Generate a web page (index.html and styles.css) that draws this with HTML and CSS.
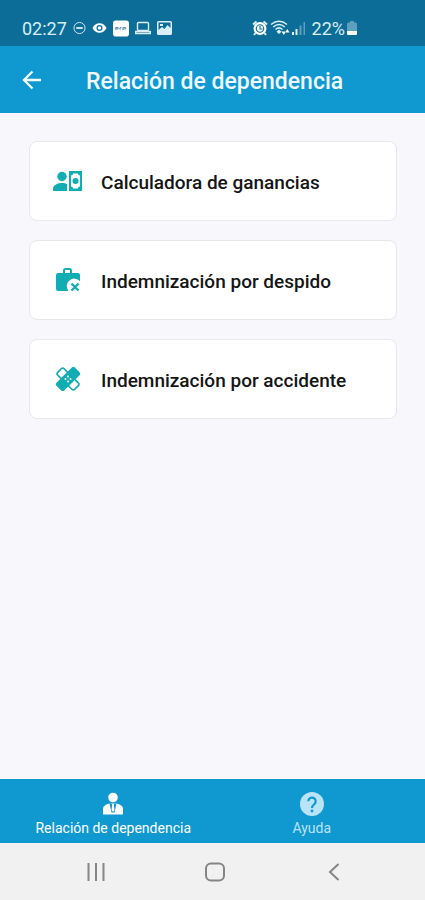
FILE: index.html
```
<!DOCTYPE html>
<html lang="es">
    <head>
        <meta charset="utf-8">
        <meta name="viewport" content="width=device-width, initial-scale=1">
        <title>Relación de dependencia</title>
        <link rel="stylesheet" href="styles.css">
    </head>
    <body>
        <div class="status">
            <div class="status-left">
                <span>02:27</span>
                <svg width="13" height="14" viewBox="0 0 14 14" fill="none" stroke="currentColor">
                    <circle cx="7" cy="7" r="6"/>
                    <path d="M3.5 7h7" stroke-width="2"/>
                </svg>
                <svg width="15" height="14" viewBox="0 0 16 14">
                    <path fill="#fff" fill-rule="evenodd" d="M0.500 7C2 3.700 4.800 2 8 2s6 1.700 7.500 5C14 10.300 11.200 12 8 12S2 10.300 0.500 7zM8 3.800a3.200 3.200 0 1 0 0 6.400 3.200 3.200 0 0 0 0-6.400z"/>
                    <circle cx="8" cy="7" r="1.800" fill="#fff"/>
                </svg>
                <svg width="16" height="18" viewBox="0 0 17 18">
                    <rect width="17" height="17" y="1" rx="3" fill="#fff"/>
                    <path d="M3 8v3M3 8.500h2.500v1.500H3M7.500 11V8.500H9M10.500 11V8.500h3V10h-3" fill="none" stroke="#4d8aa5"/>
                </svg>
                <svg width="16" height="14" viewBox="0 0 16 14" fill="none" stroke="currentColor" stroke-width="1.400">
                    <rect x="2.500" y="1.500" width="11" height="8" rx="1"/>
                    <path d="M0.700 10.500v2h14.600v-2z"/>
                </svg>
                <svg width="15" height="14" viewBox="0 0 15 14">
                    <path fill="currentColor" fill-rule="evenodd" d="M1.500 0h12A1.500 1.500 0 0 1 15 1.500v11a1.500 1.500 0 0 1-1.500 1.500h-12A1.500 1.500 0 0 1 0 12.500v-11A1.500 1.500 0 0 1 1.500 0zM1.500 9l3.500-3 2.500 2 3-4 3 3V1.500h-12zM3 3h3v2H3z"/>
                </svg>
            </div>
            <div class="status-right">
                <svg width="16" height="16" viewBox="0 0 16 16">
                    <path d="M1 4.500L4.500 1.500M15 4.500L11.500 1.500M3.500 13L2 15M12.500 13l1.500 2" stroke="currentColor" stroke-width="2"/>
                    <circle cx="8" cy="8.500" r="6.500" fill="#fff"/>
                    <circle cx="8" cy="8.500" r="3.700" fill="none" stroke="#0c6d98" stroke-width="1.100"/>
                    <path d="M8 6v3h2.500" fill="none" stroke="#0c6d98" stroke-width="1.200"/>
                </svg>
                <svg width="20" height="16" viewBox="0 0 20 16">
                    <path d="M1 4.500Q9 -2 17 4.500M3.200 7Q9 2 14.800 7M5.500 9.500Q9 6.200 12.500 9.500" fill="none" stroke="currentColor" stroke-width="1.500"/>
                    <path d="M9 9.500l2.500 2.200L9 14 6.500 11.700z" fill="currentColor"/>
                    <path d="M11.500 11.500h4.500l-2.200 3.500zM15 12.500h4.500L17.300 9z" fill="#fff"/>
                </svg>
                <svg width="14" height="16" viewBox="0 0 14 16" fill="currentColor">
                    <path d="M0 12h2v3H0zM3.500 9h2v6h-2z"/>
                    <path d="M7.500 5.500h2V15h-2zM11.500 2h1.500v13h-1.500z" opacity=".4"/>
                </svg>
                <span class="percent">22%</span>
                <svg width="10" height="16" viewBox="0 0 10 16" fill="currentColor">
                    <path d="M3 1h4v1.500h1.500a1.500 1.500 0 0 1 1.500 1.500V11H0V4a1.500 1.500 0 0 1 1.500-1.500H3z" opacity=".4"/>
                    <path d="M0 11h10v3a1 1 0 0 1-1 1H1a1 1 0 0 1-1-1z" fill="#fff"/>
                </svg>
            </div>
        </div>

        <header class="bar">
            <button type="button" class="back" aria-label="Volver">
                <svg width="20" height="20" viewBox="0 0 20 20" fill="none" stroke="currentColor" stroke-width="2.300">
                    <path d="M19 10H2M10.500 1.500L2 10l8.500 8.500"/>
                </svg>
            </button>
            <h1 class="title">Relación de dependencia</h1>
        </header>

        <main class="list">
            <a href="#ganancias" class="card">
                <svg class="card-icon" width="30" height="24" viewBox="0 0 30 24" fill="currentColor">
                    <circle cx="9" cy="7.500" r="4.700"/>
                    <path d="M0 22v-2.500C0 16 5 14 9 14c2 0 3.500.400 5 1v7z"/>
                    <path fill-rule="evenodd" d="M16 2h13v20H16zM20 4.500c0 1.200-.700 2-2 2v11c1.300 0 2 .800 2 2h5c0-1.200.700-2 2-2v-11c-1.300 0-2-.800-2-2z"/>
                    <circle cx="22.500" cy="12" r="3"/>
                </svg>
                <span>Calculadora de ganancias</span>
            </a>
            <a href="#despido" class="card">
                <svg class="card-icon" width="30" height="24" viewBox="0 0 30 24">
                    <path fill="currentColor" fill-rule="evenodd" d="M5 5h5V2.500A2.500 2.500 0 0 1 12.500 0h4A2.500 2.500 0 0 1 19 2.500V5h6a2 2 0 0 1 2 2v6.300A7.500 7.500 0 0 0 15.500 23H5a2 2 0 0 1-2-2V7a2 2 0 0 1 2-2zM12 5h5V2h-5z"/>
                    <path d="M18.500 15.500l7 7M25.500 15.500l-7 7" stroke="currentColor" stroke-width="2.400"/>
                </svg>
                <span>Indemnización por despido</span>
            </a>
            <a href="#accidente" class="card">
                <svg class="card-icon" width="30" height="24" viewBox="0 0 30 24">
                    <g transform="rotate(45 15 12)">
                        <rect x="3" y="7.500" width="24" height="9" rx="2" fill="#fff" stroke="currentColor" stroke-width="1.700"/>
                    </g>
                    <g transform="rotate(-45 15 12)">
                        <rect x="2" y="6.500" width="26" height="11" rx="2.500" fill="currentColor"/>
                    </g>
                    <g fill="#fff">
                        <circle cx="15" cy="9.500" r="1"/>
                        <circle cx="12.500" cy="12" r="1"/>
                        <circle cx="17.500" cy="12" r="1"/>
                        <circle cx="15" cy="14.500" r="1"/>
                    </g>
                </svg>
                <span>Indemnización por accidente</span>
            </a>
        </main>

        <nav class="tabs">
            <a href="#relacion" class="tab active">
                <svg width="24" height="24" viewBox="0 0 24 24" fill="currentColor">
                    <circle cx="12" cy="5.500" r="4.800"/>
                    <path d="M2 22.500v-5.500c0-3 2.500-4.500 6.500-5.500h7c4 1 6.500 2.500 6.500 5.500v5.500z"/>
                    <path d="M8.500 11.500l2 9h3l2-9h-2l-.700 1.500.700 5-1.500 2-1.500-2 .700-5-.700-1.500z" fill="#1098d1"/>
                </svg>
                <span>Relación de dependencia</span>
            </a>
            <a href="#ayuda" class="tab">
                <svg width="24" height="24" viewBox="0 0 24 24">
                    <circle cx="12" cy="12" r="12" fill="currentColor"/>
                    <path d="M8.300 9.300a3.700 3.700 0 1 1 6.200 2.700c-1.500 1.300-2.500 1.800-2.500 4" fill="none" stroke="#1098d1" stroke-width="2.200"/>
                    <circle cx="12" cy="19" r="1.400" fill="#1098d1"/>
                </svg>
                <span>Ayuda</span>
            </a>
        </nav>

        <div class="sysnav">
            <button type="button" class="sys" aria-label="Recientes">
                <svg width="20" height="20" viewBox="0 0 20 20" stroke="currentColor" stroke-width="2">
                    <path d="M2.500 1v18M10 1v18M17.500 1v18"/>
                </svg>
            </button>
            <button type="button" class="sys" aria-label="Inicio">
                <svg width="20" height="20" viewBox="0 0 20 20" fill="none" stroke="currentColor" stroke-width="2">
                    <rect x="1" y="1.500" width="18" height="17" rx="5"/>
                </svg>
            </button>
            <button type="button" class="sys" aria-label="Atrás">
                <svg width="20" height="20" viewBox="0 0 20 20" fill="none" stroke="currentColor" stroke-width="2">
                    <path d="M14.500 2L6 10l8.500 8"/>
                </svg>
            </button>
        </div>
    </body>
</html>
```
FILE: styles.css
```
*{
    box-sizing: border-box;
}
body{
    margin: 0;
    min-height: 100vh;
    display: flex;
    flex-direction: column;
    background-color: #f7f7fc;
    font-family: Roboto, "Liberation Sans", sans-serif;
}
svg{
    display: block;
    flex-shrink: 0;
}
button{
    border: none;
    padding: 0;
    background: none;
    color: inherit;
}
a{
    text-decoration: none;
}
.status{
    display: flex;
    justify-content: space-between;
    height: 46px;
    padding: 11px 68px 0 22px;
    background-color: #0c6d98;
    color: #d9eef6;
    font-size: 18px;
}
.status-left, .status-right{
    display: flex;
    align-items: center;
    height: 34px;
}
.status-left{
    gap: 6px;
}
.status-right{
    gap: 2px;
}
.percent{
    padding-left: 4px;
}
.bar{
    display: flex;
    align-items: center;
    gap: 44px;
    height: 67px;
    background-color: #1098d1;
    padding: 0 22px;
    color: #f0fafe;
}
.title{
    margin: 0;
    padding-top: 4px;
    font-size: 23px;
    font-weight: 500;
}
.list{
    flex: 1;
    display: flex;
    flex-direction: column;
    gap: 19px;
    padding: 28px 28px 28px 29px;
}
.card{
    display: flex;
    align-items: center;
    gap: 18px;
    height: 80px;
    padding: 0 23px;
    background-color: #fff;
    border: 1px solid #e8e8ec;
    border-radius: 8px;
    color: #151515;
    font-size: 19px;
    font-weight: 500;
}
.card span{
    padding-top: 2px;
}
.card-icon{
    color: #12adb3;
}
.tabs{
    display: flex;
    height: 64px;
    padding: 0 14px;
    background-color: #1098d1;
}
.tab{
    flex: 1;
    display: flex;
    flex-direction: column;
    align-items: center;
    gap: 4px;
    padding-top: 13px;
    color: #b9e3f6;
    font-size: 14px;
    line-height: 16px;
}
.active{
    color: #fff;
}
.sysnav{
    display: flex;
    height: 57px;
    padding: 0 32px 0 36px;
    background-color: #f1f1f1;
    color: #858585;
}
.sys{
    flex: 1;
    display: flex;
    align-items: center;
    justify-content: center;
}
```
